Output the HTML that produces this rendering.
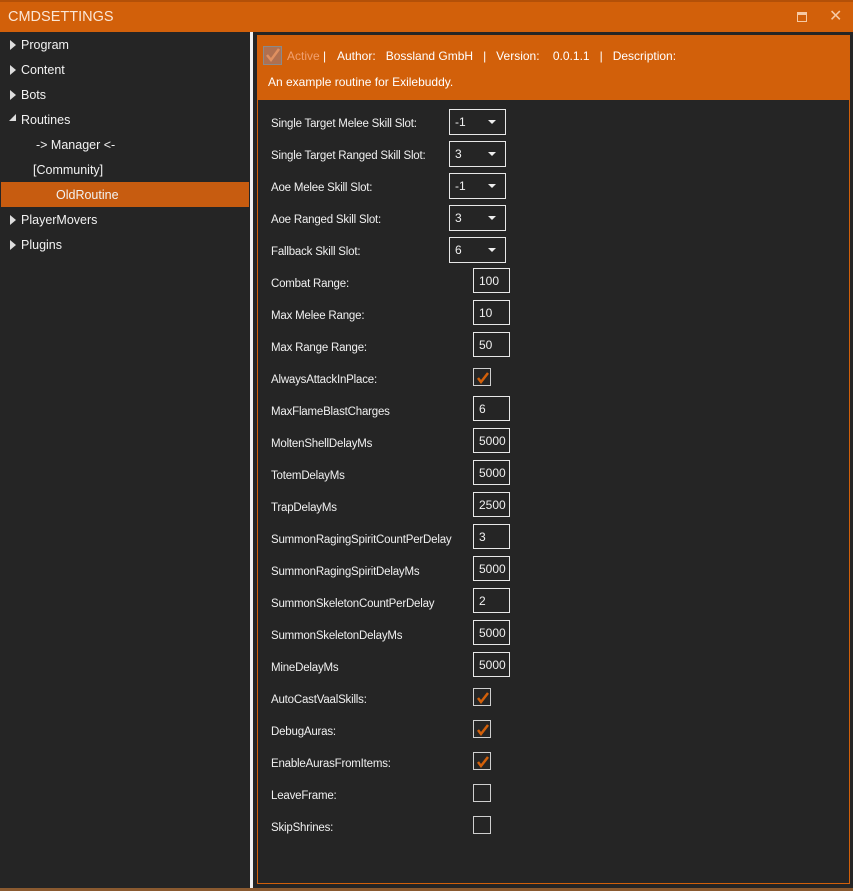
<!DOCTYPE html>
<html><head><meta charset="utf-8"><style>
*{margin:0;padding:0;box-sizing:border-box}
body{width:853px;height:891px;background:#8a5a30;font-family:"Liberation Sans",sans-serif;font-size:12px;color:#f0f0f0;position:relative;overflow:hidden}
#title{position:absolute;left:0;top:0;width:853px;height:32px;background:#d2600a;border-top:2px solid #b35008}
#title span{position:absolute;left:8px;top:7px;font-size:14.5px;color:#fbe6d6}
#left{position:absolute;left:0;top:32px;width:250px;height:856px;background:#252525}
#div{position:absolute;left:250px;top:32px;width:3px;height:856px;background:#f2f2f2}
#right{position:absolute;left:253px;top:32px;width:600px;height:856px;background:#252525}
.ti{position:absolute;font-size:12.5px;color:#f2f2f2}
.tri{position:absolute;left:10px;width:0;height:0;border-top:5px solid transparent;border-bottom:5px solid transparent;border-left:6px solid #ddd}
#sel{position:absolute;left:1px;top:182px;width:248px;height:25px;background:#c75c10}
#panel{position:absolute;left:257px;top:35px;width:593px;height:849px;border:1px solid #d2600a;background:#252525}
#hdr{position:absolute;left:258px;top:36px;width:591px;height:64px;background:#d2600a}
.lb{position:absolute;left:271px;font-size:11.5px;color:#f0f0f0;letter-spacing:-0.2px}
.cb{position:absolute;left:449px;width:57px;height:26px;border:1px solid #e8e8e8}
.cb span{position:absolute;left:5px;top:5px;font-size:12px}
.cb i{position:absolute;right:9px;top:10px;border-left:4px solid transparent;border-right:4px solid transparent;border-top:4px solid #eee}
.tb{position:absolute;left:473px;width:37px;height:25px;border:1px solid #e8e8e8}
.tb span{position:absolute;left:5px;top:5px;font-size:12px}
.ck{position:absolute;left:473px;width:18px;height:18px;border:1px solid #cfcfcf}
.ck svg{position:absolute;left:1px;top:1px}
</style></head><body>
<div id="title"><span>CMDSETTINGS</span>
<div style="position:absolute;left:797px;top:10px;width:10px;height:10px;border:1px solid #f6c9a4;border-top-width:3px"></div>
<div style="position:absolute;left:829px;top:4px;font-size:16px;color:#f6c9a4">✕</div></div>
<div id="left"></div>
<div id="sel"></div>
<div class="tri" style="top:40px"></div><div class="ti" style="left:21px;top:38px">Program</div>
<div class="tri" style="top:65px"></div><div class="ti" style="left:21px;top:63px">Content</div>
<div class="tri" style="top:90px"></div><div class="ti" style="left:21px;top:88px">Bots</div>
<div style="position:absolute;left:9px;top:114px;border-left:7px solid transparent;border-bottom:7px solid #ddd"></div><div class="ti" style="left:21px;top:113px">Routines</div>
<div class="ti" style="left:36px;top:138px">-&gt; Manager &lt;-</div>
<div class="ti" style="left:33px;top:163px">[Community]</div>
<div class="ti" style="left:56px;top:188px">OldRoutine</div>
<div class="tri" style="top:215px"></div><div class="ti" style="left:21px;top:213px">PlayerMovers</div>
<div class="tri" style="top:240px"></div><div class="ti" style="left:21px;top:238px">Plugins</div>
<div id="div"></div>
<div id="right"></div>
<div id="panel"></div>
<div id="hdr">
<div style="position:absolute;left:5px;top:10px;width:19px;height:19px;border:1px solid #8a8a8a;background:#b07050"><svg width="17" height="17"><path d="M3 8l4 5 8-11" stroke="#e09060" stroke-width="2.5" fill="none"/></svg></div>
<div style="position:absolute;left:29px;top:13px;font-size:12px;color:#f0a070">Active <b style="color:#fff;font-weight:normal">|</b></div>
<div style="position:absolute;left:79px;top:13px;font-size:12px;color:#fff">Author:&nbsp;&nbsp;&nbsp;Bossland GmbH&nbsp;&nbsp;&nbsp;|&nbsp;&nbsp;&nbsp;Version:&nbsp;&nbsp;&nbsp;&nbsp;0.0.1.1&nbsp;&nbsp;&nbsp;|&nbsp;&nbsp;&nbsp;Description:</div>
<div style="position:absolute;left:10px;top:39px;font-size:12px;color:#fff">An example routine for Exilebuddy.</div>
</div>

<div class="lb" style="top:118px">Single Target Melee Skill Slot:</div><div class="cb" style="top:109px"><span>-1</span><i></i></div>
<div class="lb" style="top:150px">Single Target Ranged Skill Slot:</div><div class="cb" style="top:141px"><span>3</span><i></i></div>
<div class="lb" style="top:182px">Aoe Melee Skill Slot:</div><div class="cb" style="top:173px"><span>-1</span><i></i></div>
<div class="lb" style="top:214px">Aoe Ranged Skill Slot:</div><div class="cb" style="top:205px"><span>3</span><i></i></div>
<div class="lb" style="top:246px">Fallback Skill Slot:</div><div class="cb" style="top:237px"><span>6</span><i></i></div>
<div class="lb" style="top:278px">Combat Range:</div><div class="tb" style="top:268px"><span>100</span></div>
<div class="lb" style="top:310px">Max Melee Range:</div><div class="tb" style="top:300px"><span>10</span></div>
<div class="lb" style="top:342px">Max Range Range:</div><div class="tb" style="top:332px"><span>50</span></div>
<div class="lb" style="top:374px">AlwaysAttackInPlace:</div><div class="ck" style="top:368px"><svg width="16" height="16"><path d="M3 8l3 4 7-9" stroke="#d2600a" stroke-width="2.5" fill="none"/></svg></div>
<div class="lb" style="top:406px">MaxFlameBlastCharges</div><div class="tb" style="top:396px"><span>6</span></div>
<div class="lb" style="top:438px">MoltenShellDelayMs</div><div class="tb" style="top:428px"><span>5000</span></div>
<div class="lb" style="top:470px">TotemDelayMs</div><div class="tb" style="top:460px"><span>5000</span></div>
<div class="lb" style="top:502px">TrapDelayMs</div><div class="tb" style="top:492px"><span>2500</span></div>
<div class="lb" style="top:534px">SummonRagingSpiritCountPerDelay</div><div class="tb" style="top:524px"><span>3</span></div>
<div class="lb" style="top:566px">SummonRagingSpiritDelayMs</div><div class="tb" style="top:556px"><span>5000</span></div>
<div class="lb" style="top:598px">SummonSkeletonCountPerDelay</div><div class="tb" style="top:588px"><span>2</span></div>
<div class="lb" style="top:630px">SummonSkeletonDelayMs</div><div class="tb" style="top:620px"><span>5000</span></div>
<div class="lb" style="top:662px">MineDelayMs</div><div class="tb" style="top:652px"><span>5000</span></div>
<div class="lb" style="top:694px">AutoCastVaalSkills:</div><div class="ck" style="top:688px"><svg width="16" height="16"><path d="M3 8l3 4 7-9" stroke="#d2600a" stroke-width="2.5" fill="none"/></svg></div>
<div class="lb" style="top:726px">DebugAuras:</div><div class="ck" style="top:720px"><svg width="16" height="16"><path d="M3 8l3 4 7-9" stroke="#d2600a" stroke-width="2.5" fill="none"/></svg></div>
<div class="lb" style="top:758px">EnableAurasFromItems:</div><div class="ck" style="top:752px"><svg width="16" height="16"><path d="M3 8l3 4 7-9" stroke="#d2600a" stroke-width="2.5" fill="none"/></svg></div>
<div class="lb" style="top:790px">LeaveFrame:</div><div class="ck" style="top:784px"></div>
<div class="lb" style="top:822px">SkipShrines:</div><div class="ck" style="top:816px"></div>
</body></html>
